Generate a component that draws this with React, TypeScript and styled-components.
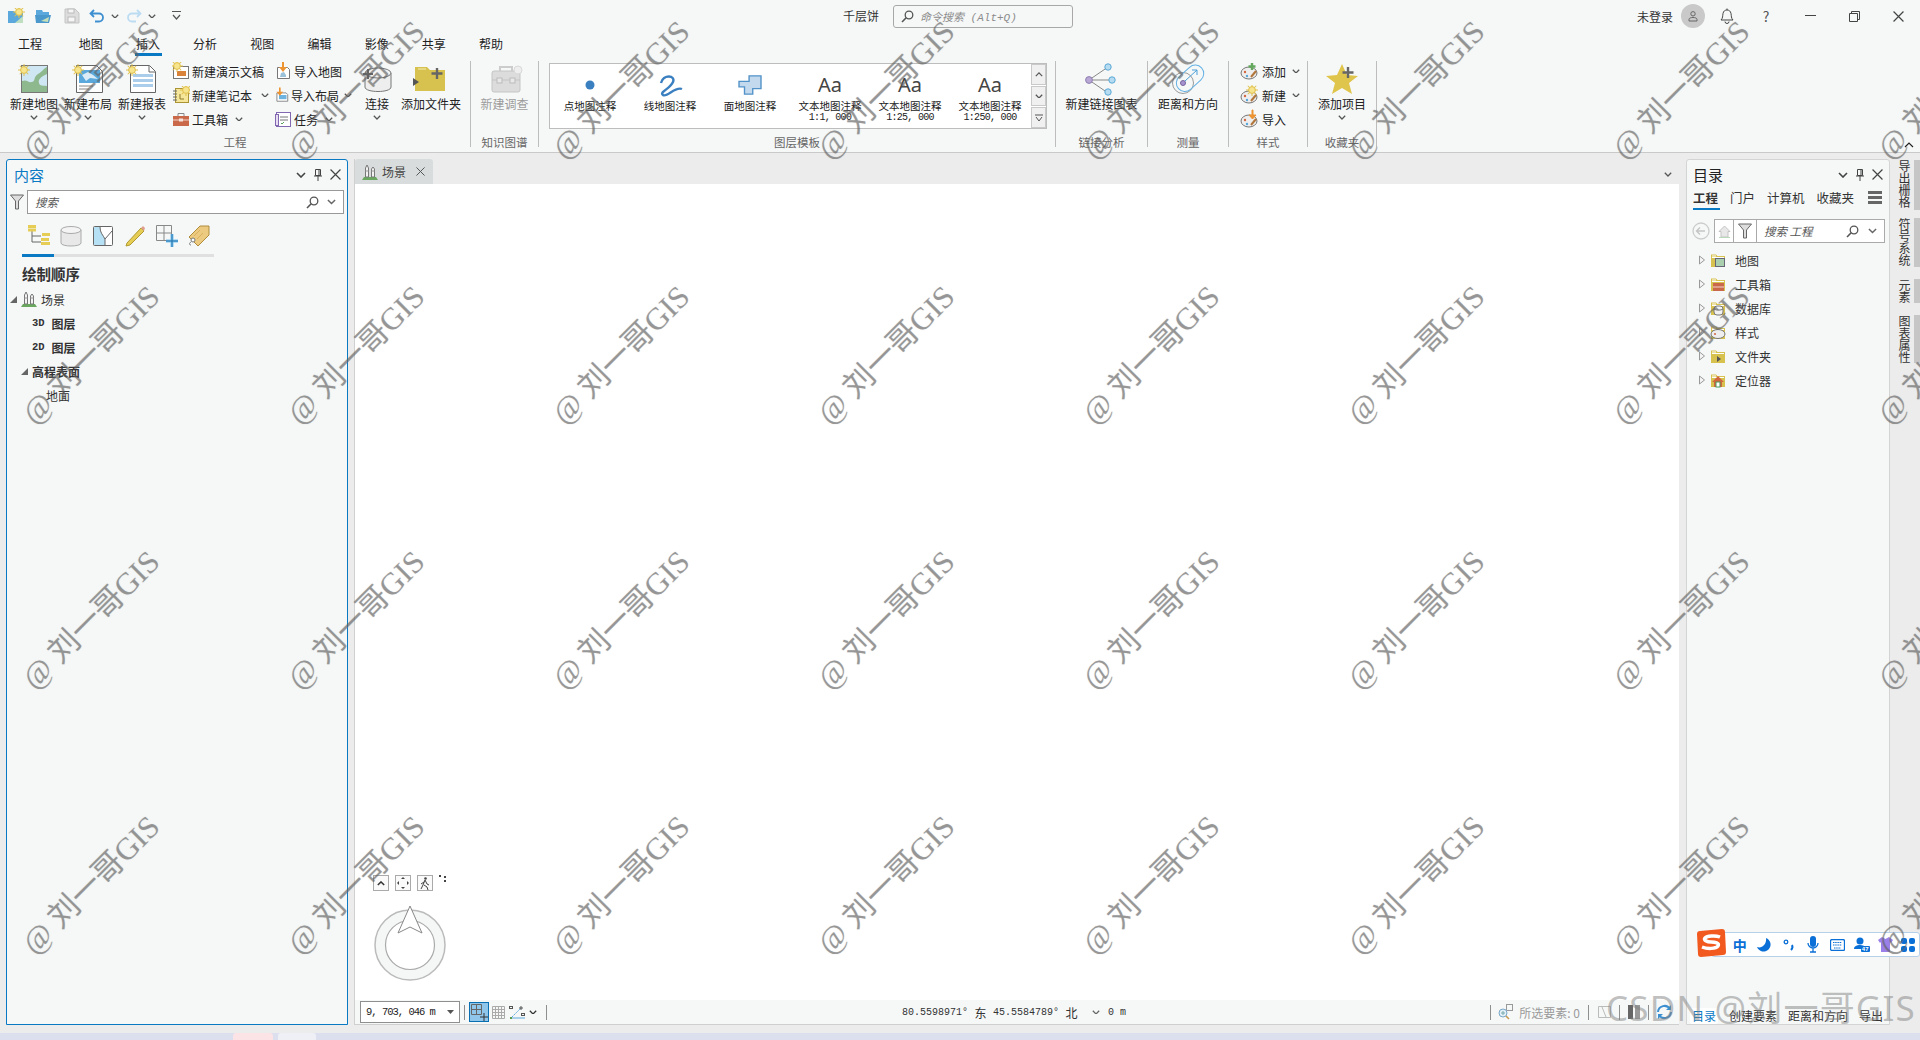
import * as React from 'react'
import styled, { createGlobalStyle } from 'styled-components'

const CJK = `"Noto Sans CJK SC", "Noto Sans", sans-serif`
const MONO = `"Liberation Mono", "Noto Sans CJK SC", monospace`

const Global = createGlobalStyle`
html, body { margin: 0; padding: 0; background: #ececec; }
* { box-sizing: border-box; }
`

const Page = styled.div`
position: relative;
width: 1920px;
height: 1040px;
overflow: hidden;
display: flex;
flex-direction: column;
background: #ececec;
color: #222;
font-family: ${CJK};
font-size: 12px;
`

const Header = styled.header`
height: 153px;
flex: none;
background: #f6f8f8;
border-bottom: 1px solid #c9c9c9;
position: relative;
`

const TitleBar = styled.div`
height: 32px;
display: flex;
align-items: center;
`

const Qat = styled.div`
display: flex;
align-items: center;
width: 843px;
padding-left: 6px;
`

const QatBtn = styled.span<{ $w: number }>`
display: flex;
align-items: center;
justify-content: center;
width: ${p => p.$w}px;
`

const DocName = styled.span`
width: 50px;
line-height: 16px;
color: #333;
`

const CommandSearch = styled.div`
width: 180px;
height: 23px;
border: 1px solid #a8a8a8;
border-radius: 3px;
display: flex;
align-items: center;
gap: 6px;
padding-left: 7px;
color: #8c8c8c;
font-size: 11px;
font-style: italic;
font-family: ${MONO};
`

const TitleRight = styled.div`
margin-left: auto;
display: flex;
align-items: center;
`

const Login = styled.span`
width: 44px;
color: #333;
`

const Avatar = styled.span`
width: 24px;
height: 24px;
border-radius: 50%;
background: #c9c9c9;
display: flex;
align-items: center;
justify-content: center;
`

const WinBtn = styled.span`
width: 44px;
display: flex;
align-items: center;
justify-content: center;
color: #555;
font-size: 14px;
`

const BellBtn = styled(WinBtn)`
width: 39px;
padding-left: 5px;
`

const TabRow = styled.nav`
height: 24px;
display: flex;
padding-left: 18px;
`

const RibbonTab = styled.span<{ $active?: boolean }>`
width: 57.2px;
height: 24px;
line-height: 24px;
position: relative;
color: #222;
&:first-child {
  width: 60.7px;
}
&::after {
  content: "";
  display: ${p => (p.$active ? 'block' : 'none')};
  position: absolute;
  left: -1px;
  top: 21px;
  width: 27px;
  height: 3px;
  background: #0a79c4;
}
`

const Ribbon = styled.div`
display: flex;
height: 96px;
`

const Group = styled.section<{ $w: number }>`
width: ${p => p.$w}px;
flex: none;
display: flex;
flex-direction: column;
`

const GroupBody = styled.div<{ $pad?: number; $center?: boolean }>`
height: 80px;
display: flex;
padding-left: ${p => p.$pad ?? 0}px;
justify-content: ${p => (p.$center ? 'center' : 'flex-start')};
`

const GroupLabel = styled.div`
height: 16px;
line-height: 13px;
text-align: center;
color: #666;
font-size: 11.5px;
`

const GroupSep = styled.div`
width: 1px;
height: 86px;
margin-top: 5px;
background: #bdbdbd;
flex: none;
`

const BigButton = styled.div<{ $w: number; $off?: boolean }>`
width: ${p => p.$w}px;
flex: none;
display: flex;
flex-direction: column;
align-items: center;
padding-top: 6px;
color: ${p => (p.$off ? '#9c9c9c' : '#222')};
white-space: nowrap;
`

const BigIcon = styled.div`
height: 34px;
`

const BigText = styled.div`
height: 16px;
line-height: 16px;
`

const ChevronSlot = styled.div`
height: 10px;
line-height: 6px;
`

const SmallCol = styled.div<{ $w: number; $left?: number }>`
width: ${p => p.$w}px;
margin-left: ${p => p.$left ?? 0}px;
flex: none;
padding-top: 3px;
display: flex;
flex-direction: column;
`

const SmallRow = styled.div`
height: 24px;
display: flex;
align-items: center;
gap: 2px;
white-space: nowrap;
`

const SmallMore = styled.span<{ $l: number }>`
margin-left: ${p => p.$l}px;
display: flex;
`

const Gallery = styled.div`
width: 498px;
height: 66px;
margin: 7px 0 0 10px;
background: #fff;
border: 1px solid #bdbdbd;
display: flex;
`

const GalleryItem = styled.div`
width: 80px;
flex: none;
display: flex;
flex-direction: column;
align-items: center;
padding-top: 6px;
font-size: 10.5px;
line-height: 12px;
text-align: center;
color: #222;
white-space: nowrap;
`

const GalleryIcon = styled.div`
height: 30px;
display: flex;
align-items: center;
justify-content: center;
`

const GalleryScale = styled.span`
font-family: ${MONO};
font-size: 10px;
letter-spacing: -0.7px;
`

const AaGlyph = styled.span`
font-family: "Noto Sans", sans-serif;
font-size: 20px;
line-height: 24px;
color: #444;
`

const GalleryScroll = styled.div`
margin-left: auto;
width: 15px;
display: flex;
flex-direction: column;
gap: 1px;
background: #fff;
`

const ScrollBtn = styled.div`
flex: 1;
background: #f0f0f0;
border: 1px solid #c9c9c9;
display: flex;
align-items: center;
justify-content: center;
`

const CollapseBtn = styled.span`
position: absolute;
right: 6px;
bottom: 4px;
line-height: 6px;
`

const Workspace = styled.main`
flex: 1;
display: flex;
padding: 6px 0 8px 6px;
min-height: 0;
`

const Panel = styled.aside<{ $w: number; $active?: boolean }>`
width: ${p => p.$w}px;
flex: none;
background: #f6f8f8;
border: 1px solid ${p => (p.$active ? '#0a79c4' : '#d4d4d4')};
border-radius: 3px 3px 0 0;
display: flex;
flex-direction: column;
`

const PanelHead = styled.div<{ $pad: number; $color: string }>`
height: 29px;
display: flex;
align-items: center;
padding: 0 6px 0 ${p => p.$pad}px;
color: ${p => p.$color};
font-size: 15px;
`

const PanelTools = styled.div`
margin-left: auto;
display: flex;
align-items: center;
gap: 8px;
`

const SearchRow = styled.div`
display: flex;
align-items: center;
height: 24px;
margin-top: 1px;
padding: 0 3px 0 3px;
gap: 3px;
`

const SearchBox = styled.div`
flex: 1;
height: 24px;
background: #fff;
border: 1px solid #999;
display: flex;
align-items: center;
padding: 0 7px;
gap: 8px;
`

const Hint = styled.span`
font-style: italic;
color: #555;
font-size: 11.5px;
flex: 1;
`

const ViewIcons = styled.div`
display: flex;
padding: 10px 0 0 20px;
height: 35px;
gap: 8px;
align-items: flex-start;
`

const ViewTrack = styled.div`
margin: 5px 0 0 15px;
width: 192px;
height: 3px;
background: #e0e0e0;
&::before {
  content: "";
  display: block;
  width: 32px;
  height: 3px;
  background: #0a79c4;
}
`

const DrawOrder = styled.div`
margin: 6px 0 2px 15px;
height: 22px;
line-height: 22px;
font-size: 14.5px;
font-weight: 700;
color: #333;
`

const TreeRow = styled.div<{ $pad: number; $bold?: boolean }>`
height: 24px;
display: flex;
align-items: center;
gap: 4px;
padding-left: ${p => p.$pad}px;
font-weight: ${p => (p.$bold ? 700 : 400)};
color: #333;
`

const ShortTag = styled.span`
font-family: ${MONO};
font-weight: 700;
font-size: 10.5px;
margin-right: 3px;
`

const CenterCol = styled.div`
width: 1325px;
margin: 0 7px 0 6px;
flex: none;
display: flex;
flex-direction: column;
border-left: 1px solid #d0d0d0;
`

const DocTabs = styled.div`
height: 25px;
flex: none;
display: flex;
align-items: stretch;
padding-right: 7px;
`

const DocTab = styled.div`
width: 78px;
background: #d9dcdc;
border-radius: 3px 3px 0 0;
display: flex;
align-items: center;
gap: 4px;
padding: 0 8px 0 7px;
color: #444;
`

const DocTabClose = styled.span`
margin-left: auto;
display: flex;
`

const DocTabsMenu = styled.span`
margin-left: auto;
align-self: center;
`

const MapView = styled.div`
flex: 1;
background: #fff;
position: relative;
`

const NavButtons = styled.div`
position: absolute;
left: 18px;
bottom: 109px;
display: flex;
gap: 6px;
align-items: flex-start;
`

const NavBtn = styled.span`
width: 16px;
height: 16px;
border: 1px solid #aaa;
background: #fafafa;
display: flex;
align-items: center;
justify-content: center;
`

const Compass = styled.div`
position: absolute;
left: 18px;
bottom: 18px;
line-height: 0;
`

const StatusBar = styled.div`
height: 25px;
flex: none;
background: #f6f8f8;
border-bottom: 1px solid #cfcfcf;
display: flex;
align-items: center;
padding-left: 5px;
`

const ScaleBox = styled.div`
width: 100px;
height: 22px;
background: #fff;
border: 1px solid #8f8f8f;
display: flex;
align-items: center;
padding: 0 5px;
font-family: ${MONO};
font-size: 10.5px;
letter-spacing: -1px;
color: #222;
justify-content: space-between;
`

const StatusSep = styled.span<{ $l: number; $r: number }>`
width: 1px;
height: 15px;
background: #8f8f8f;
margin: 0 ${p => p.$r}px 0 ${p => p.$l}px;
flex: none;
`

const ActiveSnap = styled.span`
width: 20px;
height: 20px;
background: #8fc6ea;
border: 1px solid #0a6fb0;
display: flex;
align-items: center;
justify-content: center;
margin-right: 3px;
`

const Coords = styled.div`
margin-left: 355px;
display: flex;
align-items: center;
font-family: ${MONO};
font-size: 10px;
color: #333;
white-space: pre;
`

const CoordCjk = styled.span`
font-family: ${CJK};
font-size: 12px;
margin: 0 6.5px;
`

const StatusRight = styled.div`
margin-left: auto;
display: flex;
align-items: center;
color: #9a9a9a;
padding-right: 6px;
`

const SelectionText = styled.span`
margin-left: 5px;
`

const RightTabs = styled.div`
display: flex;
height: 22px;
margin-top: -3px;
padding-left: 6px;
gap: 12px;
align-items: center;
color: #333;
position: relative;
`

const RightTab = styled.span<{ $active?: boolean }>`
font-weight: ${p => (p.$active ? 700 : 400)};
font-size: 12.5px;
position: relative;
&::after {
  content: "";
  display: ${p => (p.$active ? 'block' : 'none')};
  position: absolute;
  left: 0;
  right: -2px;
  bottom: -3px;
  height: 2px;
  background: #0a79c4;
}
`

const HamburgerSlot = styled.span`
margin-left: auto;
margin-right: 7px;
line-height: 0;
`

const CatalogNav = styled.div`
display: flex;
align-items: center;
margin-top: 11px;
height: 24px;
padding: 0 4px 0 5px;
`

const BackSlot = styled.span`
width: 22px;
line-height: 0;
`

const CatalogBox = styled.div`
flex: 1;
height: 24px;
border: 1px solid #aaa;
background: #fff;
display: flex;
align-items: center;
`

const BoxCell = styled.span<{ $w: number; $line?: boolean }>`
width: ${p => p.$w}px;
height: 22px;
display: flex;
align-items: center;
justify-content: center;
border-right: ${p => (p.$line ? '1px solid #aaa' : 'none')};
flex: none;
`

const CatalogHint = styled(Hint)`
padding-left: 7px;
`

const CatalogTree = styled.div`
padding-top: 5px;
flex: 1;
`

const CatalogRow = styled.div`
height: 24px;
display: flex;
align-items: center;
padding-left: 12px;
color: #333;
`

const CatalogFolder = styled.span`
margin-left: 5px;
line-height: 0;
`

const CatalogLabel = styled.span`
margin-left: 9px;
`

const BottomTabs = styled.div`
display: flex;
height: 14px;
align-items: flex-end;
padding-left: 3px;
color: #333;
white-space: nowrap;
`

const BottomTab = styled.span<{ $active?: boolean }>`
height: 16px;
line-height: 16px;
padding: 0 ${p => (p.$active ? 2 : 0)}px;
margin-right: 11px;
color: ${p => (p.$active ? '#0a79c4' : '#333')};
background: ${p => (p.$active ? '#fff' : 'transparent')};
border-radius: 0 0 3px 3px;
`

const SideRail = styled.div`
width: 30px;
flex: none;
display: flex;
flex-direction: column;
margin-top: 1px;
`

const RailTab = styled.div<{ $h: number; $gap: number }>`
height: ${p => p.$h}px;
margin-bottom: ${p => p.$gap}px;
padding-right: 3px;
border-right: 6px solid #c6c6c6;
writing-mode: vertical-rl;
line-height: 14px;
color: #333;
white-space: nowrap;
`

const ImeBar = styled.div`
position: absolute;
left: 1711px;
top: 932px;
width: 209px;
height: 25px;
background: #fff;
border: 1px solid #b7d0ea;
border-radius: 3px;
display: flex;
align-items: center;
padding-left: 18px;
color: #0a6fd6;
`

const ImeLogo = styled.div`
position: absolute;
left: 1695px;
top: 928px;
line-height: 0;
`

const ImeCell = styled.span<{ $w: number }>`
width: ${p => p.$w}px;
display: flex;
justify-content: center;
font-weight: 700;
font-size: 14px;
line-height: 18px;
`

const DesktopStrip = styled.footer`
height: 7px;
flex: none;
background: #dcdfee;
display: flex;
padding-left: 233px;
gap: 5px;
`

const DesktopChip = styled.span<{ $w: number; $c: string }>`
width: ${p => p.$w}px;
height: 7px;
background: ${p => p.$c};
border-radius: 3px 3px 0 0;
`

const WatermarkLayer = styled.div`
position: absolute;
left: -44px;
top: -45px;
display: grid;
grid-template-columns: repeat(8, 265px);
grid-auto-rows: 265px;
pointer-events: none;
`

const WatermarkCell = styled.div`
display: flex;
align-items: center;
justify-content: center;
`

const WatermarkText = styled.span`
transform: rotate(-45deg);
white-space: nowrap;
font-family: "Liberation Serif", "Noto Sans CJK SC", serif;
font-size: 31px;
color: rgba(90, 90, 90, 0.5);
text-shadow: 0 0 1px rgba(120, 120, 120, 0.35);
`

const CsdnMark = styled.div`
position: absolute;
left: 1606px;
top: 986px;
font-family: "Noto Sans", "Noto Sans CJK SC", sans-serif;
font-size: 35px;
line-height: 44px;
letter-spacing: 1.2px;
color: rgba(130, 130, 130, 0.5);
white-space: nowrap;
pointer-events: none;
`

const Chevron = ({ c = '#555', w = 8 }: { c?: string; w?: number }) => (
  <svg width={w} height={w * 0.6} viewBox="0 0 10 6"><path d="M1 1l4 4 4-4" fill="none" stroke={c} strokeWidth="1.6" /></svg>
)

const Sun = ({ x, y }: { x: number; y: number }) => (
  <g stroke="#e0c04a" strokeWidth="1">
    {[0, 45, 90, 135].map(a => <line key={a} x1={x - 6} y1={y} x2={x + 6} y2={y} transform={`rotate(${a} ${x} ${y})`} />)}
    <circle cx={x} cy={y} r="3.4" fill="#f6e48e" />
  </g>
)

const NewMapIcon = () => (
  <svg width="40" height="34" viewBox="0 0 40 34">
    <rect x="7.5" y="3.5" width="26" height="27" fill="#cfe6f3" stroke="#777" />
    <path d="M8 30v-11c5-2 6 2 10 1s1-5 6-8 5-5 9-7v7c-6 3-9 5-8 9s5 2 8 3v6z" fill="#8eb98f" />
    <Sun x={10} y={8} />
  </svg>
)

const NewLayoutIcon = () => (
  <svg width="40" height="34" viewBox="0 0 40 34">
    <path d="M8.5 3.5h20l6 6v21h-26z" fill="#fff" stroke="#666" />
    <path d="M11 8h21v13H11z" fill="#5aa8dc" />
    <path d="M14 13l6-3 5 3 5 4-8-1-4 3z" fill="#dcecf6" />
    <path d="M11 24h14M11 27h10" stroke="#888" />
    <Sun x={10} y={8} />
  </svg>
)

const NewReportIcon = () => (
  <svg width="40" height="34" viewBox="0 0 40 34">
    <path d="M8.5 3.5h19l6 6v21h-25z" fill="#fff" stroke="#666" />
    <path d="M11 12h20v3H11zM11 17h20v3H11zM11 22h20v3H11z" fill="#a9cdea" />
    <path d="M27 4v6h6" fill="none" stroke="#666" />
    <Sun x={10} y={8} />
  </svg>
)

const DataConnectIcon = () => (
  <svg width="40" height="34" viewBox="0 0 40 34">
    <path d="M8 11v14c0 6 26 6 26 0V11" fill="#eee" stroke="#777" />
    <ellipse cx="21" cy="11" rx="13" ry="5" fill="#f4f4f4" stroke="#777" />
    <path d="M6 12h10M11 7v10" stroke="#666" strokeWidth="2" />
  </svg>
)

const AddFolderIcon = () => (
  <svg width="40" height="34" viewBox="0 0 40 34">
    <path d="M4 5h12l3 3h15v21H4z" fill="#d8c24f" />
    <path d="M7 7h8" stroke="#f6eeb8" />
    <path d="M2 16l6 4-6 4z" fill="#555" />
    <path d="M26 6v11M20.500 11.500h11" stroke="#666" strokeWidth="2.400" />
  </svg>
)

const InvestigationIcon = () => (
  <svg width="40" height="34" viewBox="0 0 40 34">
    <rect x="7" y="9" width="28" height="21" rx="2" fill="#dcdcdc" stroke="#c4c4c4" />
    <path d="M15 9V5h12v4" fill="none" stroke="#ccc" strokeWidth="2" />
    <path d="M7 18h28" stroke="#c4c4c4" />
    <rect x="12" y="16" width="5" height="5" fill="#e8e8e8" stroke="#bbb" />
    <rect x="25" y="16" width="5" height="5" fill="#e8e8e8" stroke="#bbb" />
    <circle cx="33" cy="8" r="4" fill="#eee" stroke="#d8d8d8" />
  </svg>
)

const LinkChartIcon = () => (
  <svg width="40" height="34" viewBox="0 0 40 34">
    <path d="M7 18L26 5M7 18h23M7 18l19 13" stroke="#888" />
    <circle cx="7" cy="18" r="3.4" fill="#b9a8d6" stroke="#8f80b0" />
    <circle cx="26" cy="5" r="3.2" fill="#b6dcf2" stroke="#5ba8d6" />
    <circle cx="30" cy="18" r="3.2" fill="#b6dcf2" stroke="#5ba8d6" />
    <circle cx="26" cy="30" r="3.2" fill="#b6dcf2" stroke="#5ba8d6" />
  </svg>
)

const DistanceIcon = () => (
  <svg width="40" height="34" viewBox="0 0 40 34">
    <circle cx="15" cy="21" r="10.5" fill="none" stroke="#999" />
    <rect x="7" y="8" width="31" height="17" rx="8.5" transform="rotate(-42 22 17)" fill="none" stroke="#63b1e3" />
    <circle cx="15" cy="21" r="2.5" fill="#a692cf" stroke="#77659e" />
    <path d="M17 19l12-11M24 8h5v5" fill="none" stroke="#4a9fd8" />
  </svg>
)

const StarIcon = () => (
  <svg width="40" height="34" viewBox="0 0 40 34">
    <path d="M20 2l5 11 11 1-9 7 3 11-10-6-10 6 3-11-9-7 11-1z" fill="#e0c54c" />
    <path d="M26 5v11M20.500 10.500h11" stroke="#666" strokeWidth="2.400" />
  </svg>
)

const PaletteIcon = ({ badge }: { badge: 'plus' | 'sun' | 'arrow' }) => (
  <svg width="20" height="20" viewBox="0 0 20 20">
    <ellipse cx="9" cy="12" rx="8" ry="6" fill="#eee" stroke="#777" />
    <circle cx="5" cy="11" r="1.2" fill="#d2663f" />
    <circle cx="7" cy="15" r="1.2" fill="#58a6dc" />
    <path d="M11 16l5-6" stroke="#b0763a" strokeWidth="2" />
    {badge === 'plus' && <path d="M12 2v7M8.5 5.500h7" stroke="#63a85c" strokeWidth="2.4" />}
    {badge === 'sun' && <Sun x={12} y={5} />}
    {badge === 'arrow' && <path d="M12 1v5h-3l3.500 4 3.500-4h-3V1z" fill="#ec9332" stroke="#ec9332" />}
  </svg>
)

const SmallIcons: Record<string, React.ReactNode> = {
  slides: <>
    <rect x="1.500" y="4.500" width="15" height="12" fill="#fff" stroke="#777" />
    <rect x="5" y="9" width="9" height="5" fill="#d8823a" />
    <Sun x={5} y={4} />
  </>,
  notebook: <>
    <rect x="3.500" y="2.500" width="13" height="14" fill="#f6e69a" stroke="#aa9433" />
    <path d="M1 5h4M1 8h4M1 11h4M1 14h4" stroke="#666" />
    <path d="M8 8v5h4" fill="none" stroke="#8b7a2a" />
    <Sun x={14} y={4} />
  </>,
  toolbox: <>
    <rect x="1" y="6" width="16" height="10" fill="#c9694a" />
    <path d="M6 6V3.500h6V6" fill="none" stroke="#888" />
    <path d="M1 10h16" stroke="#f2d5c8" />
    <rect x="7" y="8.500" width="4" height="3" fill="#f4e3da" />
  </>,
  importMap: <>
    <path d="M3.500 5.500h10l2 2v9h-12z" fill="#fff" stroke="#777" />
    <path d="M7 11l3 -1 2 3v2H6z" fill="#9bc2d8" />
    <path d="M8 0v5H5l4 5 4-5h-3V0z" fill="#ec9332" />
  </>,
  importLayout: <>
    <path d="M3.500 6.500h11l2 2v8h-13z" fill="#fff" stroke="#777" />
    <rect x="6" y="9" width="9" height="5" fill="#6cb3e0" />
    <path d="M6 0v5H3l4 5 4-5H8V0z" fill="#ec9332" />
  </>,
  tasks: <>
    <rect x="2.500" y="2.500" width="14" height="14" fill="#fff" stroke="#8268b0" />
    <rect x="1.500" y="4.500" width="3" height="11" fill="#e8def4" stroke="#8268b0" />
    <path d="M6 7h8M6 10h8" stroke="#777" />
    <path d="M7 13l1 1 2-2" fill="none" stroke="#5aa35a" />
  </>,
}

const Small = ({ name }: { name: string }) => (
  <svg width="18" height="18" viewBox="0 0 18 18">{SmallIcons[name]}</svg>
)

const SceneIcon = ({ s = 16 }: { s?: number }) => (
  <svg width={s} height={s} viewBox="0 0 16 16">
    <path d="M0 16l2-3h12l2 3z" fill="#6aa860" />
    <path d="M3.500 13V4l1.500-3 1.500 3v9zM9.500 13V5l1.500-2 1.500 2v8z" fill="#f2f2f2" stroke="#777" />
    <path d="M3.500 7h3M9.500 7h3" stroke="#999" />
  </svg>
)

const CloseX = ({ s = 10, c = '#444' }: { s?: number; c?: string }) => (
  <svg width={s} height={s} viewBox="0 0 10 10"><path d="M.5.5l9 9M9.500.5l-9 9" stroke={c} strokeWidth="1.100" fill="none" /></svg>
)

const PinIcon = () => (
  <svg width="8" height="12" viewBox="0 0 8 12"><path d="M1.500.5h5v6h-5zM0 7h8M4 7v5M5 1v5" stroke="#444" fill="none" /></svg>
)

const Magnifier = () => (
  <svg width="13" height="13" viewBox="0 0 13 13"><circle cx="8" cy="5" r="3.800" fill="none" stroke="#555" strokeWidth="1.300" /><path d="M5.200 7.800L1 12" stroke="#555" strokeWidth="1.600" /></svg>
)

const FunnelIcon = ({ s = 14 }: { s?: number }) => (
  <svg width={s} height={s + 2} viewBox="0 0 14 16"><path d="M.5 1h13L8.500 7v8h-3V7z" fill="#ddd" stroke="#666" /></svg>
)

const ExpandedTri = () => (
  <svg width="7" height="7" viewBox="0 0 7 7"><path d="M0 7h7V0z" fill="#666" /></svg>
)

const CollapsedTri = () => (
  <svg width="6" height="10" viewBox="0 0 6 10"><path d="M.5 1l5 4-5 4z" fill="#f4f4f4" stroke="#999" /></svg>
)

const FolderBase = ({ children }: { children?: React.ReactNode }) => (
  <svg width="16" height="15" viewBox="0 0 16 15">
    <path d="M1 1.500h5l1.500 1.500H15v11H1z" fill="#d8c24f" />
    <path d="M2 3h4M2 4.500h12" stroke="#fff" />
    {children}
  </svg>
)

const catalogItems: [string, React.ReactNode][] = [
  ['地图', <rect key="m" x="5.500" y="5.500" width="9" height="8" fill="#a9cfae" stroke="#667" />],
  ['工具箱', <g key="t"><rect x="3" y="6" width="11" height="8" fill="#c9694a" /><path d="M3 10h11" stroke="#f2d5c8" /></g>],
  ['数据库', <g key="d"><rect x="4" y="5" width="9" height="9" rx="3" fill="#f2f2f2" stroke="#777" /><path d="M4 8c2 1.500 7 1.500 9 0" fill="none" stroke="#777" /></g>],
  ['样式', <g key="s"><ellipse cx="8" cy="9" rx="7" ry="4.500" fill="#eee" stroke="#777" /><circle cx="5" cy="9" r="1" fill="#d2663f" /></g>],
  ['文件夹', <path key="f" d="M7 7l4 3-4 3z" fill="#555" />],
  ['定位器', <g key="l"><path d="M8 3L2 9h2v5h8V9h2z" fill="#d2663f" /><rect x="6" y="9" width="4" height="5" fill="#fff" stroke="#4a9a5a" /></g>],
]

const viewIcons: React.ReactNode[] = [
  <svg key="a" width="24" height="24" viewBox="0 0 24 24"><path d="M5 7v11h9M5 12h9" fill="none" stroke="#666" /><rect x="1" y="1" width="8" height="3" fill="#e6cd55" /><rect x="1" y="4.500" width="8" height="3" fill="#e6cd55" /><rect x="15" y="9" width="8" height="3" fill="#e6cd55" /><rect x="14" y="14" width="8" height="3" fill="#e6cd55" /><rect x="14" y="18" width="9" height="3" fill="#e6cd55" /></svg>,
  <svg key="b" width="24" height="24" viewBox="0 0 24 24"><path d="M2 6v13c0 4 20 4 20 0V6" fill="#e8e8e8" stroke="#aaa" /><ellipse cx="12" cy="6" rx="10" ry="3.500" fill="#f4f4f4" stroke="#aaa" /></svg>,
  <svg key="c" width="24" height="24" viewBox="0 0 24 24"><rect x="2.500" y="2.500" width="19" height="19" rx="1" fill="#fff" stroke="#666" /><path d="M3 3h6c0 6 3 8 5 12v6H3z" fill="#b6e0f4" /><path d="M9 3c0 6 3 8 5 12v6M14 15l7-8" fill="none" stroke="#666" /></svg>,
  <svg key="d" width="24" height="24" viewBox="0 0 24 24"><path d="M4 19L18 4l3 3L7 21l-4 1z" fill="#e6cd55" stroke="#b09a30" /><path d="M18 4l2-2 2 2-1 3z" fill="#e0a090" /></svg>,
  <svg key="e" width="24" height="24" viewBox="0 0 24 24"><path d="M1.500 1.500h15v15h-15zM1.500 9h15M9 1.500v15" fill="none" stroke="#888" /><path d="M17 10v13M11 17h12" stroke="#7cc4ee" strokeWidth="3" /><path d="M17 10v13M11 17h12" stroke="#1f6ea8" /></svg>,
  <svg key="f" width="24" height="24" viewBox="0 0 24 24"><path d="M2 13L13 2h9v9L11 22z" fill="#eccb80" stroke="#b08d3c" /><path d="M7 12l6-6M10 15l6-6" stroke="#d8b060" /><circle cx="6" cy="16" r="2" fill="#fff" stroke="#777" /><path d="M4 18c-2 1-2 3 0 3" fill="none" stroke="#777" /></svg>,
]

const tabs = ['工程', '地图', '插入', '分析', '视图', '编辑', '影像', '共享', '帮助']

const gallery: { text: string; scale?: string; icon: React.ReactNode }[] = [
  { text: '点地图注释', icon: <svg width="12" height="12"><circle cx="6" cy="6" r="4.500" fill="#3a7fc0" /></svg> },
  { text: '线地图注释', icon: <svg width="28" height="26" viewBox="0 0 28 26"><path d="M5 11C7 2 20 3 17 10S3 20 7 23s12-9 19-6" fill="none" stroke="#3a7fc0" strokeWidth="2.400" /></svg> },
  { text: '面地图注释', icon: <svg width="26" height="22" viewBox="0 0 28 24"><path d="M13 2h13v14H17v6H8v-8H2V8h11z" fill="#c3daee" stroke="#5292c8" strokeWidth="1.500" /></svg> },
  { text: '文本地图注释', scale: '1:1, 000', icon: <AaGlyph>Aa</AaGlyph> },
  { text: '文本地图注释', scale: '1:25, 000', icon: <AaGlyph>Aa</AaGlyph> },
  { text: '文本地图注释', scale: '1:250, 000', icon: <AaGlyph>Aa</AaGlyph> },
]

const Big = ({ w, icon, text, more, off }: { w: number; icon: React.ReactNode; text: string; more?: boolean; off?: boolean }) => (
  <BigButton $w={w} $off={off}>
    <BigIcon>{icon}</BigIcon>
    <BigText>{text}</BigText>
    {more && <ChevronSlot><Chevron /></ChevronSlot>}
  </BigButton>
)

const PanelControls = () => (
  <PanelTools>
    <Chevron c="#444" w={10} />
    <PinIcon />
    <CloseX s={11} />
  </PanelTools>
)

export default function App() {
  const marks = Array.from({ length: 32 }, (_, i) => i)
  return (
    <Page>
      <Global />
      <Header>
        <TitleBar>
          <Qat>
            <QatBtn $w={20}>
              <svg width="18" height="16" viewBox="0 0 18 16"><path d="M1 3h6l2 2h7v10H1z" fill="#5aa8dc" /><path d="M8 15l8-7v7z" fill="#bfe0c0" /><Sun x={12} y={4} /></svg>
            </QatBtn>
            <QatBtn $w={34}>
              <svg width="18" height="16" viewBox="0 0 18 16"><path d="M2 2h6l1 2h6v3H2z" fill="#5aa8dc" /><path d="M1 7h16l-2 8H2z" fill="#4a98cc" /><path d="M7 13l8-4-1 5z" fill="#c8e0b8" /></svg>
            </QatBtn>
            <QatBtn $w={25}>
              <svg width="17" height="16" viewBox="0 0 17 16"><path d="M1 1h10l4 4v10H1z" fill="#ddd" stroke="#c4c4c4" /><rect x="4" y="9" width="7" height="5" fill="#f6f6f6" stroke="#bbb" /><rect x="4" y="1" width="6" height="4" fill="#f6f6f6" stroke="#bbb" /></svg>
            </QatBtn>
            <QatBtn $w={24}>
              <svg width="16" height="14" viewBox="0 0 16 14"><path d="M5 1L1.500 4.500 5 8M2 4.500h8a4 4 0 0 1 0 8H6" fill="none" stroke="#3d8fd0" strokeWidth="1.800" /></svg>
            </QatBtn>
            <QatBtn $w={12}><Chevron /></QatBtn>
            <QatBtn $w={26}>
              <svg width="16" height="14" viewBox="0 0 16 14"><path d="M11 1l3.500 3.500L11 8M14 4.500H6a4 4 0 0 0 0 8h4" fill="none" stroke="#bcdcf2" strokeWidth="1.800" /></svg>
            </QatBtn>
            <QatBtn $w={10}><Chevron /></QatBtn>
            <QatBtn $w={38}>
              <svg width="9" height="10" viewBox="0 0 9 10"><path d="M0 .5h9M1 4l3.500 4L8 4" fill="none" stroke="#555" strokeWidth="1.200" /></svg>
            </QatBtn>
          </Qat>
          <DocName>千层饼</DocName>
          <CommandSearch><Magnifier />命令搜索 (Alt+Q)</CommandSearch>
          <TitleRight>
            <Login>未登录</Login>
            <Avatar>
              <svg width="10" height="11" viewBox="0 0 10 11"><circle cx="5" cy="2.800" r="2.200" fill="none" stroke="#666" /><path d="M1 10V8.500C1 7 3 6.500 5 6.500s4 .5 4 2V10z" fill="none" stroke="#666" /></svg>
            </Avatar>
            <BellBtn>
              <svg width="14" height="16" viewBox="0 0 14 16"><path d="M1 12c2-2 1.500-4 2-6.500C3.500 3 5 2 7 2s3.500 1 4 3.500c.5 2.500 0 4.500 2 6.500zM5 13.500a2 2 0 0 0 4 0M7 2V.5" fill="none" stroke="#444" /></svg>
            </BellBtn>
            <WinBtn>?</WinBtn>
            <WinBtn><svg width="11" height="2"><rect width="11" height="1" fill="#444" /></svg></WinBtn>
            <WinBtn><svg width="11" height="11" viewBox="0 0 11 11"><path d="M.5 2.500h8v8h-8zM2.500 2.500v-2h8v8h-2" fill="none" stroke="#444" /></svg></WinBtn>
            <WinBtn><CloseX s={11} /></WinBtn>
          </TitleRight>
        </TitleBar>
        <TabRow>
          {tabs.map(t => <RibbonTab key={t} $active={t === '插入'}>{t}</RibbonTab>)}
        </TabRow>
        <Ribbon>
          <Group $w={470}>
            <GroupBody $pad={7}>
              <Big w={54} icon={<NewMapIcon />} text="新建地图" more />
              <Big w={54} icon={<NewLayoutIcon />} text="新建布局" more />
              <Big w={54} icon={<NewReportIcon />} text="新建报表" more />
              <SmallCol $w={102} $left={3}>
                <SmallRow><Small name="slides" />新建演示文稿</SmallRow>
                <SmallRow><Small name="notebook" />新建笔记本<SmallMore $l={7}><Chevron /></SmallMore></SmallRow>
                <SmallRow><Small name="toolbox" />工具箱<SmallMore $l={5}><Chevron /></SmallMore></SmallRow>
              </SmallCol>
              <SmallCol $w={78}>
                <SmallRow><Small name="importMap" />导入地图</SmallRow>
                <SmallRow><Small name="importLayout" />导入布局<SmallMore $l={3}><Chevron /></SmallMore></SmallRow>
                <SmallRow><Small name="tasks" />任务<SmallMore $l={5}><Chevron /></SmallMore></SmallRow>
              </SmallCol>
              <Big w={50} icon={<DataConnectIcon />} text="连接" more />
              <Big w={58} icon={<AddFolderIcon />} text="添加文件夹" />
            </GroupBody>
            <GroupLabel>工程</GroupLabel>
          </Group>
          <GroupSep />
          <Group $w={67}>
            <GroupBody $center>
              <Big w={54} icon={<InvestigationIcon />} text="新建调查" off />
            </GroupBody>
            <GroupLabel>知识图谱</GroupLabel>
          </Group>
          <GroupSep />
          <Group $w={516}>
            <GroupBody>
              <Gallery>
                {gallery.map((g, i) => (
                  <GalleryItem key={i}>
                    <GalleryIcon>{g.icon}</GalleryIcon>
                    {g.text}
                    {g.scale && <GalleryScale>{g.scale}</GalleryScale>}
                  </GalleryItem>
                ))}
                <GalleryScroll>
                  <ScrollBtn><svg width="8" height="5" viewBox="0 0 10 6"><path d="M1 5l4-4 4 4" fill="none" stroke="#555" strokeWidth="1.500" /></svg></ScrollBtn>
                  <ScrollBtn><Chevron /></ScrollBtn>
                  <ScrollBtn><svg width="8" height="8" viewBox="0 0 8 8"><path d="M0 1h8M1 3l3 4 3-4" fill="none" stroke="#555" /></svg></ScrollBtn>
                </GalleryScroll>
              </Gallery>
            </GroupBody>
            <GroupLabel>图层模板</GroupLabel>
          </Group>
          <GroupSep />
          <Group $w={91}>
            <GroupBody $center><Big w={80} icon={<LinkChartIcon />} text="新建链接图表" /></GroupBody>
            <GroupLabel>链接分析</GroupLabel>
          </Group>
          <GroupSep />
          <Group $w={80}>
            <GroupBody $center><Big w={70} icon={<DistanceIcon />} text="距离和方向" /></GroupBody>
            <GroupLabel>测量</GroupLabel>
          </Group>
          <GroupSep />
          <Group $w={78}>
            <GroupBody $pad={11}>
              <SmallCol $w={66}>
                <SmallRow><PaletteIcon badge="plus" />添加<SmallMore $l={4}><Chevron /></SmallMore></SmallRow>
                <SmallRow><PaletteIcon badge="sun" />新建<SmallMore $l={4}><Chevron /></SmallMore></SmallRow>
                <SmallRow><PaletteIcon badge="arrow" />导入</SmallRow>
              </SmallCol>
            </GroupBody>
            <GroupLabel>样式</GroupLabel>
          </Group>
          <GroupSep />
          <Group $w={68}>
            <GroupBody $center><Big w={60} icon={<StarIcon />} text="添加项目" more /></GroupBody>
            <GroupLabel>收藏夹</GroupLabel>
          </Group>
          <GroupSep />
        </Ribbon>
        <CollapseBtn>
          <svg width="10" height="6" viewBox="0 0 10 6"><path d="M1 5l4-4 4 4" fill="none" stroke="#222" strokeWidth="1.200" /></svg>
        </CollapseBtn>
      </Header>

      <Workspace>
        <Panel $w={342} $active>
          <PanelHead $pad={7} $color="#0a79c4">内容<PanelControls /></PanelHead>
          <SearchRow>
            <FunnelIcon />
            <SearchBox>
              <Hint>搜索</Hint>
              <Magnifier />
              <Chevron c="#666" w={9} />
            </SearchBox>
          </SearchRow>
          <ViewIcons>{viewIcons}</ViewIcons>
          <ViewTrack />
          <DrawOrder>绘制顺序</DrawOrder>
          <TreeRow $pad={3}><ExpandedTri /><SceneIcon />场景</TreeRow>
          <TreeRow $pad={25} $bold><ShortTag>3D</ShortTag>图层</TreeRow>
          <TreeRow $pad={25} $bold><ShortTag>2D</ShortTag>图层</TreeRow>
          <TreeRow $pad={14} $bold><ExpandedTri />高程表面</TreeRow>
          <TreeRow $pad={39}>地面</TreeRow>
        </Panel>

        <CenterCol>
          <DocTabs>
            <DocTab><SceneIcon />场景<DocTabClose><CloseX s={9} c="#555" /></DocTabClose></DocTab>
            <DocTabsMenu><Chevron /></DocTabsMenu>
          </DocTabs>
          <MapView>
            <NavButtons>
              <NavBtn><svg width="8" height="5" viewBox="0 0 10 6"><path d="M1 5l4-4 4 4" fill="none" stroke="#333" strokeWidth="1.800" /></svg></NavBtn>
              <NavBtn><svg width="12" height="12" viewBox="0 0 12 12"><path d="M6 0l2 2H4zM6 12l2-2H4zM0 6l2-2v4zM12 6l-2-2v4z" fill="#444" /></svg></NavBtn>
              <NavBtn><svg width="10" height="13" viewBox="0 0 10 13"><circle cx="5.500" cy="1.500" r="1.300" fill="#444" /><path d="M5 3L3 8 1 12M5 3l2 4 2 1M4 8l3 2 1 3M4 5L1 7" fill="none" stroke="#444" /></svg></NavBtn>
              <svg width="7" height="7" viewBox="0 0 7 7"><rect width="2" height="2" fill="#444" /><rect x="5" y="1" width="2" height="2" fill="#444" /><rect x="5" y="5" width="2" height="2" fill="#444" /></svg>
            </NavButtons>
            <Compass>
              <svg width="74" height="88" viewBox="0 0 74 88">
                <circle cx="37" cy="51" r="35" fill="#f5f7f7" stroke="#bbb" strokeWidth="1.500" />
                <circle cx="37" cy="51" r="24.500" fill="#fff" stroke="#aaa" strokeWidth="1.200" />
                <path d="M37 12l12 27-12-6-12 6z" fill="#fff" stroke="#888" />
              </svg>
            </Compass>
          </MapView>
          <StatusBar>
            <ScaleBox>
              9, 703, 046 m
              <svg width="7" height="4"><path d="M0 0h7L3.500 4z" fill="#555" /></svg>
            </ScaleBox>
            <StatusSep $l={4} $r={4} />
            <ActiveSnap>
              <svg width="17" height="17" viewBox="0 0 17 17"><path d="M.5.5h10v10H.5zM.5 5.500h10M5.500.5v10" fill="none" stroke="#666" /><path d="M13 9v8M9 13h8" stroke="#333" /></svg>
            </ActiveSnap>
            <svg width="13" height="13" viewBox="0 0 13 13"><path d="M.5.5h12v12H.5zM.5 3.500h12M.5 6.500h12M.5 9.500h12M3.500.5v12M6.500.5v12M9.500.5v12" fill="none" stroke="#aaa" /></svg>
            <QatBtn $w={24}>
              <svg width="16" height="15" viewBox="0 0 16 15"><path d="M2 13h14" stroke="#5aa8dc" /><rect x="1" y="12" width="2" height="2" fill="#5a9a50" /><path d="M3 12l9-9" stroke="#5aa8dc" strokeDasharray="2 1" /><rect x=".5" y="1.500" width="3" height="2" fill="none" stroke="#555" /><rect x="12.500" y="8.500" width="3" height="2" fill="none" stroke="#555" /><path d="M12 1v4M10 3h4" stroke="#555" /></svg>
            </QatBtn>
            <Chevron c="#333" />
            <StatusSep $l={9} $r={0} />
            <Coords>80.5598971°<CoordCjk>东</CoordCjk>45.5584789°<CoordCjk>北</CoordCjk><QatBtn $w={24}><Chevron c="#666" /></QatBtn>0 m</Coords>
            <StatusRight>
              <StatusSep $l={0} $r={6} />
              <svg width="17" height="16" viewBox="0 0 17 16"><rect x="9.500" y=".5" width="6" height="6" fill="none" stroke="#999" /><circle cx="6" cy="9" r="4" fill="#e4f0f8" stroke="#7aa8c8" /><path d="M9 12l3 3" stroke="#c89a50" strokeWidth="1.500" /><path d="M4 9h4M6 7v4" stroke="#7aa" /></svg>
              <SelectionText>所选要素: 0</SelectionText>
              <StatusSep $l={8} $r={9} />
              <svg width="13" height="12" viewBox="0 0 13 12"><path d="M.5.5h12v11H.5z" fill="none" stroke="#bbb" /><path d="M4 1l4 10" stroke="#bbb" /></svg>
              <StatusSep $l={8} $r={8} />
              <svg width="12" height="14" viewBox="0 0 12 14"><rect width="5" height="14" fill="#666" /><rect x="7" width="5" height="14" fill="#999" /></svg>
              <StatusSep $l={8} $r={7} />
              <svg width="17" height="16" viewBox="0 0 17 16"><path d="M2 8a6.500 6.500 0 0 1 12-3M15 8a6.500 6.500 0 0 1-12 3" fill="none" stroke="#3d8fd0" strokeWidth="2" /><path d="M15 1v5h-5zM2 15v-5h5z" fill="#3d8fd0" /></svg>
            </StatusRight>
          </StatusBar>
        </CenterCol>

        <Panel $w={204}>
          <PanelHead $pad={6} $color="#222">目录<PanelControls /></PanelHead>
          <RightTabs>
            <RightTab $active>工程</RightTab>
            <RightTab>门户</RightTab>
            <RightTab>计算机</RightTab>
            <RightTab>收藏夹</RightTab>
            <HamburgerSlot>
              <svg width="14" height="13"><rect width="14" height="3" fill="#666" /><rect y="5" width="14" height="3" fill="#666" /><rect y="10" width="14" height="3" fill="#666" /></svg>
            </HamburgerSlot>
          </RightTabs>
          <CatalogNav>
            <BackSlot>
              <svg width="18" height="18" viewBox="0 0 18 18"><circle cx="9" cy="9" r="8" fill="none" stroke="#ccc" strokeWidth="1.300" /><path d="M13 9H5M8 5.500L4.500 9 8 12.500" fill="none" stroke="#c4c4c4" strokeWidth="1.300" /></svg>
            </BackSlot>
            <CatalogBox>
              <BoxCell $w={19} $line>
                <svg width="13" height="13" viewBox="0 0 13 13"><path d="M6.500 1L1 6.500h2V12h7V6.500h2z" fill="#e8e8e8" stroke="#c4c4c4" /><path d="M1 12.500h11" stroke="#b8d8b8" /></svg>
              </BoxCell>
              <BoxCell $w={23} $line><FunnelIcon /></BoxCell>
              <CatalogHint>搜索 工程</CatalogHint>
              <BoxCell $w={16}><Magnifier /></BoxCell>
              <BoxCell $w={24}><Chevron c="#666" w={9} /></BoxCell>
            </CatalogBox>
          </CatalogNav>
          <CatalogTree>
            {catalogItems.map(([label, overlay]) => (
              <CatalogRow key={label}>
                <CollapsedTri />
                <CatalogFolder><FolderBase>{overlay}</FolderBase></CatalogFolder>
                <CatalogLabel>{label}</CatalogLabel>
              </CatalogRow>
            ))}
          </CatalogTree>
          <BottomTabs>
            <BottomTab $active>目录</BottomTab>
            <BottomTab>创建要素</BottomTab>
            <BottomTab>距离和方向</BottomTab>
            <BottomTab>导出</BottomTab>
          </BottomTabs>
        </Panel>

        <SideRail>
          <RailTab $h={50} $gap={8}>导出栅格</RailTab>
          <RailTab $h={49} $gap={12}>符号系统</RailTab>
          <RailTab $h={24} $gap={12}>元素</RailTab>
          <RailTab $h={48} $gap={0}>图表属性</RailTab>
        </SideRail>
      </Workspace>

      <DesktopStrip>
        <DesktopChip $w={40} $c="#fbe3e6" />
        <DesktopChip $w={38} $c="#eef0f6" />
      </DesktopStrip>

      <ImeBar>
        <ImeCell $w={20}>中</ImeCell>
        <ImeCell $w={28}><svg width="15" height="15" viewBox="0 0 15 15"><path d="M10 1a7 7 0 1 1-9 9c5 2 10-3 9-9z" fill="#0a6fd6" /></svg></ImeCell>
        <ImeCell $w={24}><svg width="12" height="12" viewBox="0 0 12 12"><circle cx="3" cy="3" r="1.800" fill="none" stroke="#0a6fd6" strokeWidth="1.300" /><path d="M9 6c1 2 0 4-1 5" stroke="#0a6fd6" strokeWidth="2" fill="none" /></svg></ImeCell>
        <ImeCell $w={24}><svg width="12" height="17" viewBox="0 0 12 17"><rect x="3" y="0" width="6" height="11" rx="3" fill="#0a6fd6" /><path d="M1 7a5 5 0 0 0 10 0M6 12v4M3 16h6" fill="none" stroke="#0a6fd6" strokeWidth="1.300" /></svg></ImeCell>
        <ImeCell $w={26}><svg width="15" height="12" viewBox="0 0 15 12"><rect x=".5" y=".5" width="14" height="11" rx="1.500" fill="none" stroke="#0a6fd6" strokeWidth="1.300" /><path d="M3 3.500h9M3 6h9M4 9h7" stroke="#0a6fd6" strokeDasharray="1.500 .7" /></svg></ImeCell>
        <ImeCell $w={24}><svg width="17" height="15" viewBox="0 0 17 15"><circle cx="7" cy="4" r="3.500" fill="#0a6fd6" /><path d="M1 12c0-3 3-4 6-4s5 1 5 2v2z" fill="#0a6fd6" /><rect x="8" y="9" width="9" height="6" rx="1" fill="#0a6fd6" /><text x="8.800" y="14" fontSize="6" fontFamily="Liberation Sans, sans-serif" fill="#fff">47</text></svg></ImeCell>
        <ImeCell $w={24}><svg width="15" height="15" viewBox="0 0 15 15"><path d="M4 0l3.500 2L11 0l4 3-2 3-1-1v10H3V5L2 6 0 3z" fill="#9a80e8" /></svg></ImeCell>
        <ImeCell $w={22}><svg width="14" height="14" viewBox="0 0 14 14"><rect width="6" height="6" rx="2" fill="#0a6fd6" /><rect x="8" width="6" height="6" rx="2" fill="#0a6fd6" /><rect y="8" width="6" height="6" rx="2" fill="#0a6fd6" /><rect x="8" y="8" width="6" height="6" rx="2" fill="#0a6fd6" /></svg></ImeCell>
      </ImeBar>
      <ImeLogo>
        <svg width="32" height="30" viewBox="0 0 32 30">
          <path d="M5 3l22-2c2 0 3 1 3 3l1 20c0 2-1 3-3 3L6 29c-2 0-3-1-3-3L2 6c0-2 1-3 3-3z" fill="#f1591f" />
          <path d="M25 9c-5-2-13-1-15 1s2 4 6 4 9 1 7 4-11 3-16 1" fill="none" stroke="#fff" strokeWidth="3.500" />
        </svg>
      </ImeLogo>

      <WatermarkLayer>
        {marks.map(i => (
          <WatermarkCell key={i}><WatermarkText>@ 刘一哥GIS</WatermarkText></WatermarkCell>
        ))}
      </WatermarkLayer>
      <CsdnMark>CSDN @刘一哥GIS</CsdnMark>
    </Page>
  )
}
